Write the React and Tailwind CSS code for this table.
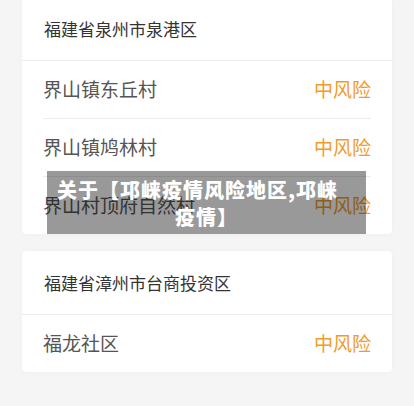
const groups = [
  {
    area: "福建省泉州市泉港区",
    places: ["界山镇东丘村", "界山镇鸠林村", "界山村顶府自然村"],
  },
  {
    area: "福建省漳州市台商投资区",
    places: ["福龙社区"],
  },
];

const App = () => {
  return (
    <div
      className="relative h-[406px] overflow-hidden bg-[#f5f5f5]"
      style={{ fontFamily: '"Noto Sans CJK SC", "Noto Sans", sans-serif' }}
    >
      <div className="-mt-[3px] flex flex-col gap-[17px] px-[22px]">
        {groups.map((group) => (
          <div
            key={group.area}
            className="rounded-[4px] bg-white shadow-[0_0_6px_rgba(0,0,0,0.03)]"
          >
            {/* Area header */}
            <div className="flex h-[64px] items-center border-b border-[#ececec] px-[22px] text-[17px] text-[#333]">
              {group.area}
            </div>

            {/* Places */}
            {group.places.map((place, i) => (
              <div
                key={place}
                className={
                  i < group.places.length - 1
                    ? "mx-[21px] flex h-[58px] items-center justify-between border-b border-[#ececec]"
                    : "mx-[21px] flex h-[57px] items-center justify-between"
                }
              >
                <span className="text-[19px] text-[#555]">{place}</span>
                <span className="text-[19px] text-[#f29b2c]">中风险</span>
              </div>
            ))}
          </div>
        ))}
      </div>

      {/* Title overlay */}
      <div className="absolute left-[47px] top-[171px] flex h-[63px] w-[319px] items-center bg-black/40 px-[10px]">
        <p className="w-full text-left text-[20px] font-black leading-[27px] tracking-[1px] text-white [text-align-last:center]">
          关于【邛崃疫情风险地区,邛崃疫情】
        </p>
      </div>
    </div>
  );
};

export default App;
